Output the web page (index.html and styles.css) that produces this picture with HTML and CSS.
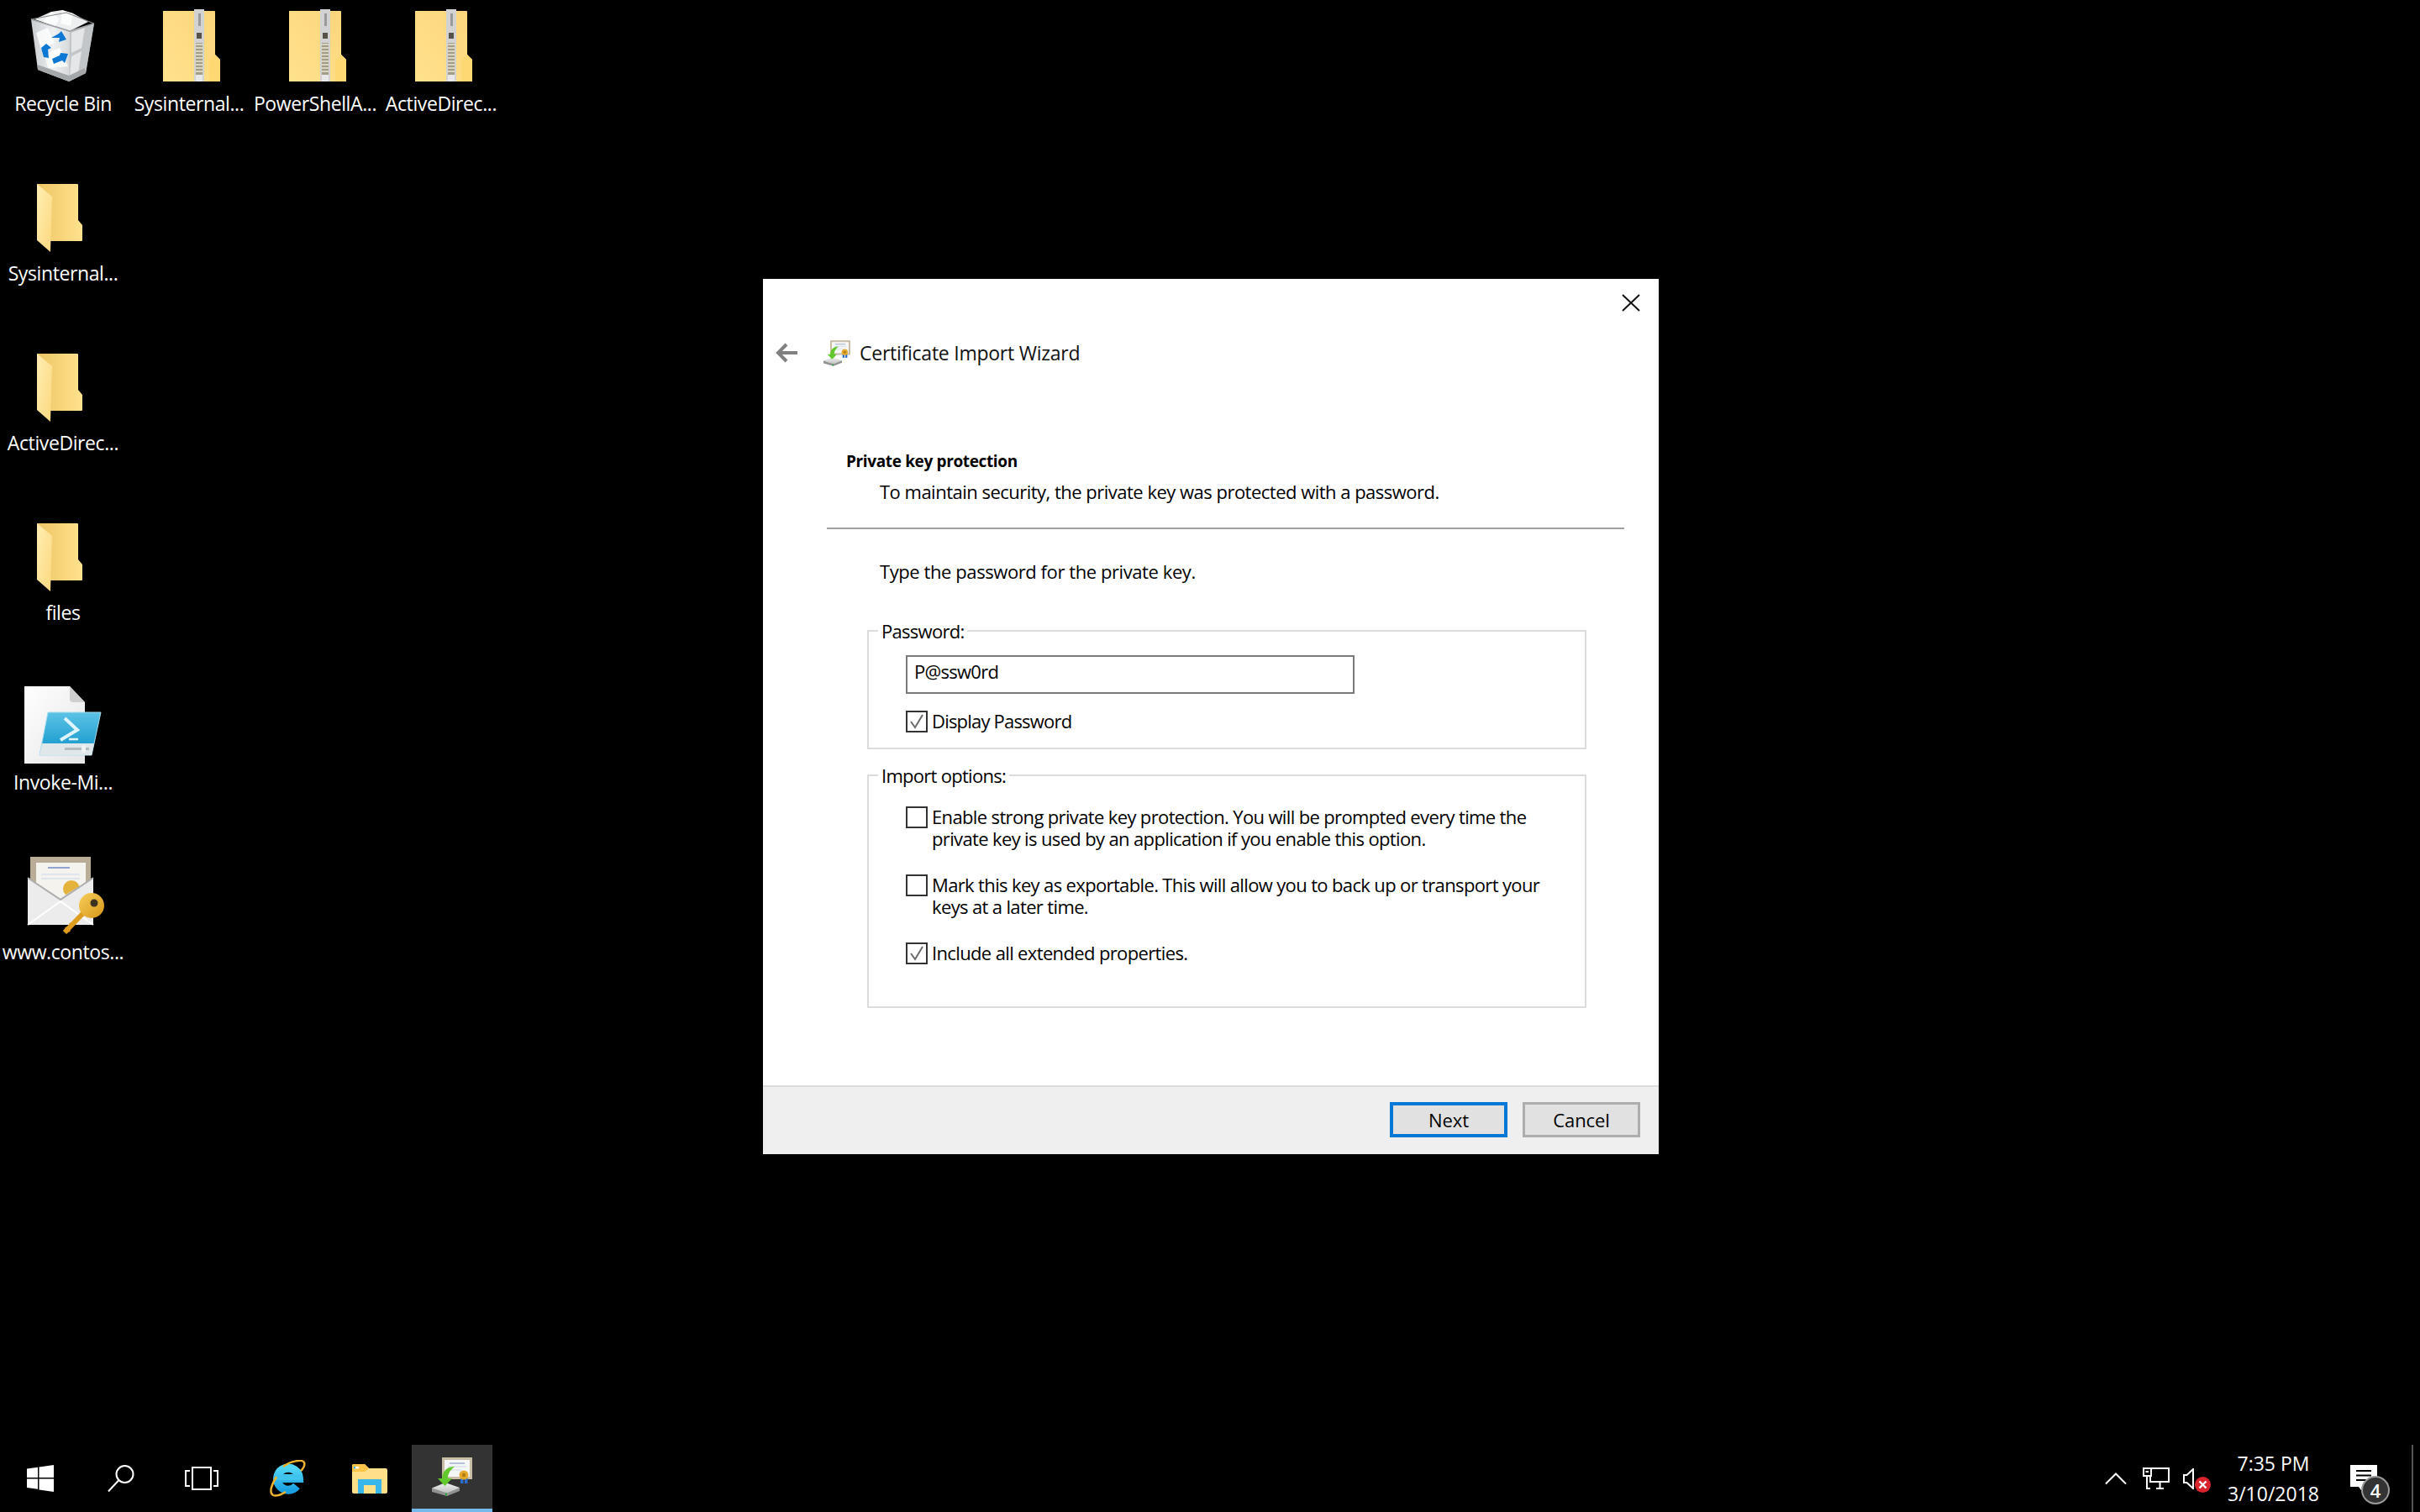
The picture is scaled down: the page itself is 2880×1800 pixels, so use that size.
FILE: index.html
```html
<!DOCTYPE html>
<html lang="en">
<head>
<meta charset="utf-8">
<title>Certificate Import Wizard</title>
<link rel="stylesheet" href="styles.css">
</head>
<body>
<svg class="defs" aria-hidden="true">
  <defs>
    <linearGradient id="zipBody" x1="0" y1="1" x2="1" y2="0"><stop offset="0" stop-color="#ffe28c"/><stop offset="1" stop-color="#fcd57c"/></linearGradient>
    <linearGradient id="folderBack" x1="0" y1="0" x2="1" y2="0"><stop offset="0" stop-color="#eec564"/><stop offset="1" stop-color="#ffe28e"/></linearGradient>
    <linearGradient id="folderFront" x1="0" y1="0" x2="1" y2="1"><stop offset="0" stop-color="#ffeeb2"/><stop offset="1" stop-color="#fcd87e"/></linearGradient>
    <linearGradient id="binBody" x1="0" y1="0" x2="1" y2="0"><stop offset="0" stop-color="#c9cdd0"/><stop offset=".35" stop-color="#eef0f1"/><stop offset=".7" stop-color="#d0d3d5"/><stop offset="1" stop-color="#8f9295"/></linearGradient>
    <linearGradient id="psWin" x1="0" y1="0" x2="0" y2="1"><stop offset="0" stop-color="#5cc3e6"/><stop offset="1" stop-color="#0d93c8"/></linearGradient>
    <linearGradient id="pageFill" x1="0" y1="0" x2="1" y2="1"><stop offset="0" stop-color="#ffffff"/><stop offset="1" stop-color="#e6e6e6"/></linearGradient>
    <linearGradient id="ieFill" x1="0" y1="0" x2="0" y2="1"><stop offset="0" stop-color="#52d6f5"/><stop offset="1" stop-color="#1ba1e2"/></linearGradient>
    <linearGradient id="keyFill" x1="0" y1="0" x2="1" y2="1"><stop offset="0" stop-color="#f7cf5a"/><stop offset="1" stop-color="#d7941a"/></linearGradient>
    <linearGradient id="driveTop" x1="0" y1="0" x2="0" y2="1"><stop offset="0" stop-color="#f2f2f2"/><stop offset="1" stop-color="#bcc0be"/></linearGradient>
    <symbol id="i-zip" viewBox="0 0 100 100">
      <path d="M19 8H80q1 0 1 1V60l6 6V91q0 1-1 1H19Z" fill="url(#zipBody)"/>
      <path d="M74 92V66l7-6 6 6V91q0 1-1 1Z" fill="#fdd873"/>
      <rect x="56" y="6" width="12" height="86" fill="#d2d2d2"/>
      <rect x="58" y="46" width="8" height="38" fill="#a39c86"/>
      <path d="M58 48h8M58 52h8M58 56h8M58 60h8M58 64h8M58 68h8M58 72h8M58 76h8M58 80h8" stroke="#ece8d8" stroke-width="1.600"/>
      <rect x="59" y="34" width="6" height="7" fill="#56524a"/>
      <rect x="61" y="11" width="3" height="15" fill="#9a9a9a"/>
      <rect x="58" y="84" width="8" height="8" fill="#e8e8e8"/>
    </symbol>
    <symbol id="i-folder" viewBox="0 0 100 100">
      <path d="M19 12H67q1 0 1 1V55l5 6V79q0 1-1 1H30Z" fill="url(#folderBack)"/>
      <path d="M19 12L37 27 35 93 19 79Z" fill="url(#folderFront)"/>
    </symbol>
    <symbol id="i-bin" viewBox="0 0 100 100">
      <path d="M12 18L58 32 87 23 77 82 57 92 20 78Z" fill="url(#binBody)"/>
      <path d="M58 32L87 23 77 82 57 92Z" fill="#c3c6c8"/>
      <path d="M60 34L76 28 72 52 60 58ZM60 62L72 56 68 82 58 86Z" fill="#e4e6e7"/>
      <path d="M16 18L36 9 49 7 62 11 80 21 58 32Z" fill="#eceeef"/>
      <path d="M36 9l10 8-6 10-14-6ZM49 7l13 4-3 15-12-3ZM18 34l14-6 8 18-16 8ZM28 60l18-8 10 22-24 2Z" fill="#ffffff" opacity=".8"/>
      <path d="M12 18L58 32 87 23" fill="none" stroke="#a0a4a7" stroke-width="1.800"/>
      <path d="M12 18L54 10 87 23" fill="none" stroke="#85888a" stroke-width="1.200"/>
      <path d="M20 78L57 92 77 82 76 76 57 85 19.500 72Z" fill="#a5a8aa"/>
      <path d="M36 40l9-5 3-3 6 10-9 3 1-5ZM24 52l6-5 6 5-4 2 1 10-6-1ZM37 65l9-4 1-3 9 1-4 11-3-3-10 4Z" fill="#0c78d3"/>
    </symbol>
    <symbol id="i-ps" viewBox="0 0 100 100">
      <path d="M4 4H58L76 23V96H4Z" fill="url(#pageFill)"/>
      <path d="M58 4L76 23H62Q58 23 58 19Z" fill="#cfcfcf"/>
      <path d="M32 35H95L84 86H22Z" fill="url(#psWin)" stroke="#a9dcee" stroke-width="1"/>
      <path d="M25 72H87L84 86H22Z" fill="#dfe7ea"/>
      <path d="M52 42L67 56 47 68" fill="none" stroke="#dff4fb" stroke-width="4"/>
      <path d="M57 67H68" stroke="#dff4fb" stroke-width="2.500"/>
      <rect x="52" y="77" width="29" height="3" fill="#b5bcbf"/>
      <rect x="72" y="74" width="5" height="9" rx="2" fill="#eef2f3"/>
    </symbol>
    <symbol id="i-cert" viewBox="0 0 100 100">
      <rect x="11" y="5" width="72" height="50" fill="#b9ad98"/>
      <rect x="18" y="12" width="59" height="44" fill="#f4f3ee"/>
      <path d="M32 18H58" stroke="#8fa5d0" stroke-width="2"/>
      <path d="M24 26H70M24 31H70" stroke="#dfe5ee" stroke-width="2"/>
      <circle cx="60" cy="43" r="10" fill="#e3b33b"/>
      <path d="M8 30L47 54 86 30V86H8Z" fill="#ececec"/>
      <path d="M8 30L47 56 86 30" fill="none" stroke="#adadad" stroke-width="2"/>
      <path d="M8 86L47 58 86 86" fill="none" stroke="#ffffff" stroke-width="2"/>
      <path d="M52 95L76 70" stroke="#df9d1f" stroke-width="6"/>
      <path d="M53 89l5 5M58 84l4 4" stroke="#df9d1f" stroke-width="3"/>
      <circle cx="84" cy="63" r="15" fill="url(#keyFill)"/>
      <circle cx="87" cy="60" r="4.500" fill="#3b3320"/>
    </symbol>
    <symbol id="i-wizard" viewBox="0 0 48 46">
      <rect x="12" y="0" width="36" height="26" fill="#c9bda6"/>
      <rect x="15" y="3" width="30" height="20" fill="#f5f6f6"/>
      <path d="M21 7H39" stroke="#9db1cf" stroke-width="1.500"/>
      <path d="M19 11H41M19 15H35" stroke="#dbe2ea" stroke-width="1.500"/>
      <rect x="34" y="25" width="3.500" height="6" fill="#2a6fd0"/>
      <rect x="39" y="25" width="3.500" height="6" fill="#2a6fd0"/>
      <circle cx="38" cy="21" r="5.500" fill="#e2a92c"/>
      <circle cx="38" cy="21" r="2.200" fill="#b47b14"/>
      <path d="M0 36.500V41L18 46 33 40V36Z" fill="#8f9290"/>
      <path d="M0 36.500L16 30 33 36 18 42.500Z" fill="url(#driveTop)"/>
      <rect x="16" y="42.500" width="2" height="3" fill="#2ea43c"/>
      <path d="M27 11C19 11 13 15 12 25H7L15.500 34 24 25H19C19 19 22 15 27 11Z" fill="#62c92c"/>
    </symbol>
  </defs>
</svg>

<main class="screen">
  <section class="desktop">
    <div class="icon-row">
      <div class="desk-item"><svg class="desk-icon"><use href="#i-bin"/></svg><span class="desk-label">Recycle Bin</span></div>
      <div class="desk-item"><svg class="desk-icon"><use href="#i-zip"/></svg><span class="desk-label">Sysinternal...</span></div>
      <div class="desk-item"><svg class="desk-icon"><use href="#i-zip"/></svg><span class="desk-label">PowerShellA...</span></div>
      <div class="desk-item"><svg class="desk-icon"><use href="#i-zip"/></svg><span class="desk-label">ActiveDirec...</span></div>
    </div>
    <div class="desk-item"><svg class="desk-icon"><use href="#i-folder"/></svg><span class="desk-label">Sysinternal...</span></div>
    <div class="desk-item"><svg class="desk-icon"><use href="#i-folder"/></svg><span class="desk-label">ActiveDirec...</span></div>
    <div class="desk-item"><svg class="desk-icon"><use href="#i-folder"/></svg><span class="desk-label">files</span></div>
    <div class="desk-item"><svg class="desk-icon"><use href="#i-ps"/></svg><span class="desk-label">Invoke-Mi...</span></div>
    <div class="desk-item"><svg class="desk-icon soft"><use href="#i-cert"/></svg><span class="desk-label">www.contos...</span></div>

    <div class="dialog">
      <div class="close-row">
        <svg class="close-x" viewBox="0 0 22 21"><path d="M1 1L21 20M21 1L1 20"/></svg>
      </div>
      <div class="wizard-head">
        <svg class="back-arrow" viewBox="0 0 26 24"><path d="M13 2L3 12 13 22M3 12H26"/></svg>
        <svg class="wizard-icon soft"><use href="#i-wizard"/></svg>
        <span class="wizard-title">Certificate Import Wizard</span>
      </div>
      <h1 class="page-title">Private key protection</h1>
      <p class="page-sub">To maintain security, the private key was protected with a password.</p>
      <hr class="divider">
      <p class="prompt">Type the password for the private key.</p>
      <fieldset class="group group-password">
        <legend class="group-legend">Password:</legend>
        <div class="text-input">P@ssw0rd</div>
        <div class="option">
          <span class="check"><svg viewBox="0 0 22 22"><path d="M4 11L9 18 18 3"/></svg></span>
          <span>Display Password</span>
        </div>
      </fieldset>
      <fieldset class="group group-import">
        <legend class="group-legend">Import options:</legend>
        <div class="option">
          <span class="check"></span>
          <span>Enable strong private key protection. You will be prompted every time the<br>private key is used by an application if you enable this option.</span>
        </div>
        <div class="option">
          <span class="check"></span>
          <span>Mark this key as exportable. This will allow you to back up or transport your<br>keys at a later time.</span>
        </div>
        <div class="option">
          <span class="check"><svg viewBox="0 0 22 22"><path d="M4 11L9 18 18 3"/></svg></span>
          <span>Include all extended properties.</span>
        </div>
      </fieldset>
      <footer class="dialog-footer">
        <button class="btn btn-default">Next</button>
        <button class="btn">Cancel</button>
      </footer>
    </div>
  </section>

  <nav class="taskbar">
    <div class="tb-btn">
      <svg class="tb-win" viewBox="0 0 32 32"><path d="M0 4.500L13 2.700V15H0ZM14.500 2.500L32 0V15H14.500ZM0 16.500H13V28.800L0 27ZM14.500 16.500H32V32L14.500 29.500Z"/></svg>
    </div>
    <div class="tb-btn">
      <svg class="tb-search" viewBox="0 0 32 32"><circle cx="20.500" cy="11" r="10"/><path d="M13 18.500L1 31.500"/></svg>
    </div>
    <div class="tb-btn">
      <svg class="tb-view" viewBox="0 0 40 28"><rect x="9" y="1" width="22" height="26"/><path d="M6 5H1V23H6M34 5H39V23H34"/></svg>
    </div>
    <div class="tb-apps">
      <div class="tb-btn">
        <svg class="tb-ie" viewBox="0 0 44 44">
          <path d="M10 22H36A13 13 0 1 0 33 31" fill="none" stroke="url(#ieFill)" stroke-width="10"/>
          <path d="M6 22H38" stroke="#3fc4ee" stroke-width="4"/>
          <path d="M17 8C26 1 40-1 42 3 43 6 41 10 38 13M9 20C3 30 0 39 5 42 9 44 15 41 20 38" fill="none" stroke="#eeb32f" stroke-width="2.500"/>
        </svg>
      </div>
      <div class="tb-btn">
        <svg class="tb-explorer" viewBox="0 0 42 35">
          <path d="M0 2Q0 0 2 0H15L20 5H40Q42 5 42 7V33Q42 35 40 35H2Q0 35 0 33Z" fill="#ffe08a"/>
          <path d="M0 2Q0 0 2 0H15L20 5 15 9H0Z" fill="#fcc54a"/>
          <rect x="2" y="3" width="6" height="2.500" fill="#ffffff"/>
          <rect x="2" y="3" width="2" height="2.500" fill="#3ab7ea"/>
          <path d="M7 18H35V35H28V25H14V35H7Z" fill="#3ab7ea"/>
        </svg>
      </div>
      <div class="tb-btn tb-active">
        <svg class="tb-wizard"><use href="#i-wizard"/></svg>
      </div>
    </div>
    <div class="tray">
      <svg class="tray-chevron" viewBox="0 0 26 14"><path d="M1 13.500L13 1.500 25 13.500"/></svg>
      <svg class="tray-net" viewBox="0 0 32 26"><rect x="9" y="1" width="22" height="16"/><path d="M16 25H25M20.500 17V25M5 10V25H9"/><rect class="net-box" x="1" y="1" width="9" height="9"/><path d="M3.500 5H7"/></svg>
      <div class="tray-sound">
        <svg class="tray-speaker" viewBox="0 0 13 25"><path d="M12 1V24L4.500 17H1V8H4.500Z"/></svg>
        <svg class="tray-mute" viewBox="0 0 19 19"><circle cx="9.500" cy="9.500" r="9.500" fill="#d9242e"/><path d="M5.500 5.500L13.500 13.500M13.500 5.500L5.500 13.500" stroke="#fff" stroke-width="2.400"/></svg>
      </div>
      <div class="clock"><span>7:35 PM</span><span>3/10/2018</span></div>
      <div class="notify">
        <svg class="notify-bubble" viewBox="0 0 32 32"><path d="M0 0H32V26H16L13 30 10 26H0Z" fill="#fff"/><path d="M7 7H25M7 12.500H25M7 18H20" stroke="#000" stroke-width="2"/></svg>
        <span class="notify-badge">4</span>
      </div>
      <span class="show-desktop"></span>
    </div>
  </nav>
</main>
</body>
</html>
```
FILE: styles.css
```css
* { box-sizing: border-box; }
html, body { margin: 0; padding: 0; width: 2880px; height: 1800px; background: #000; overflow: hidden; }
body { font-family: "Open Sans", "Noto Sans", "Liberation Sans", sans-serif; color: #000; }
.defs { position: absolute; width: 0; height: 0; }
.soft { filter: blur(.7px); }

.screen { display: flex; flex-direction: column; width: 2880px; height: 1800px; }
.desktop { position: relative; flex: 1; }
.icon-row { display: flex; }
.desk-item { display: flex; flex-direction: column; align-items: center; width: 150px; height: 202px; padding-top: 5px; }
.desk-icon { display: block; width: 100px; height: 100px; }
.desk-label { margin-top: 1px; color: #fff; font-size: 23px; line-height: 34px; letter-spacing: -.4px; white-space: nowrap; }

.dialog { position: absolute; left: 908px; top: 332px; width: 1066px; height: 1042px; display: flex; flex-direction: column; background: #fff; font-size: 22px; line-height: 26px; letter-spacing: -.64px; }
.close-row { display: flex; justify-content: flex-end; height: 48px; padding: 18px 22px 0 0; }
.close-x { width: 22px; height: 21px; }
.close-x path { fill: none; stroke: #111; stroke-width: 2; }
.wizard-head { display: flex; align-items: center; height: 80px; padding-left: 15px; }
.back-arrow { width: 26px; height: 24px; }
.back-arrow path { fill: none; stroke: #808080; stroke-width: 4; }
.wizard-icon { width: 32px; height: 31px; margin-left: 31px; }
.wizard-title { margin-left: 11px; font-size: 23px; letter-spacing: -.25px; color: #111; }
.page-title { margin: 76px 0 0 99px; font-size: 19px; font-weight: 700; line-height: 26px; letter-spacing: -.36px; }
.page-sub { margin: 9px 0 0 139px; font-size: 22px; line-height: 29px; letter-spacing: -.51px; }
.divider { width: 949px; height: 2px; margin: 28px 0 0 76px; border: 0; background: #a0a0a0; }
.prompt { margin: 35px 0 0 139px; font-size: 22px; line-height: 30px; letter-spacing: -.42px; }

.group { width: 856px; margin: 0 0 0 124px; padding: 0; border: 2px solid #dcdcdc; }
.group-password { margin-top: 43px; padding: 16px 0 18px 44px; }
.group-import { margin-top: 18px; padding: 24px 0 50px 44px; }
.group-legend { margin-left: -33px; padding: 0 4px; line-height: 26px; letter-spacing: -.72px; }
.text-input { width: 534px; height: 46px; padding: 4px 0 0 8px; border: 2px solid #7a7a7a; letter-spacing: -.72px; }
.option { display: flex; gap: 5px; margin-top: 20px; white-space: nowrap; line-height: 26px; }
.option span:last-child { margin-top: -1px; }
.group-password .option { letter-spacing: -.8px; }
.group-import .option { margin-top: 30px; }
.group-import .option:first-of-type { margin-top: 0; }
.check { flex: none; display: block; width: 26px; height: 26px; border: 2px solid #333; }
.check svg { display: block; width: 22px; height: 22px; }
.check path { fill: none; stroke: #6a6a6a; stroke-width: 2; }

.dialog-footer { display: flex; justify-content: flex-end; gap: 18px; height: 82px; margin-top: auto; padding: 18px 22px 0 0; background: #efefef; border-top: 2px solid #dcdcdc; }
.btn { width: 140px; height: 42px; padding: 0; background: #e1e1e1; border: 3px solid #adadad; font: inherit; letter-spacing: -.1px; color: #000; }
.btn-default { border: 4px solid #0078d7; }

.taskbar { position: relative; display: flex; flex: none; height: 80px; background: #000; }
.tb-btn { display: flex; align-items: center; justify-content: center; width: 96px; height: 80px; }
.tb-win { width: 32px; height: 32px; fill: #fff; }
.tb-search { width: 32px; height: 32px; fill: none; stroke: #fff; stroke-width: 2; }
.tb-view { width: 40px; height: 28px; fill: none; stroke: #fff; stroke-width: 2; }
.tb-apps { display: flex; gap: 2px; margin-left: 6px; }
.tb-ie { width: 44px; height: 44px; }
.tb-explorer { width: 42px; height: 35px; }
.tb-active { background: #333; border-bottom: 4px solid #76b9ed; }
.tb-wizard { width: 48px; height: 46px; filter: blur(.5px); }

.tray { position: absolute; right: 0; top: 0; display: flex; align-items: center; height: 80px; }
.tray-chevron { width: 26px; height: 14px; margin-right: 19px; fill: none; stroke: #fff; stroke-width: 2; }
.tray-net { width: 32px; height: 26px; margin-right: 16px; fill: none; stroke: #fff; stroke-width: 2; }
.net-box { fill: #000; }
.tray-sound { position: relative; width: 33px; height: 29px; margin-right: 21px; align-self: flex-start; margin-top: 28px; }
.tray-speaker { position: absolute; left: 0; top: 0; width: 13px; height: 25px; fill: none; stroke: #fff; stroke-width: 2; }
.tray-mute { position: absolute; left: 14px; top: 10px; width: 19px; height: 19px; }
.clock { display: flex; flex-direction: column; align-items: center; width: 107px; color: #fff; font-size: 23px; line-height: 36px; margin-right: 38px; white-space: nowrap; }
.notify { position: relative; width: 32px; height: 47px; margin-right: 41px; align-self: flex-start; margin-top: 24px; }
.notify-bubble { display: block; width: 32px; height: 32px; }
.notify-badge { position: absolute; left: 13px; top: 13px; width: 34px; height: 34px; border-radius: 50%; background: #333; border: 2px solid #9a9a9a; color: #fff; font-size: 22px; line-height: 30px; font-weight: 600; letter-spacing: 0; text-align: center; }
.show-desktop { width: 2px; height: 80px; margin-right: 8px; background: #555; }
```
